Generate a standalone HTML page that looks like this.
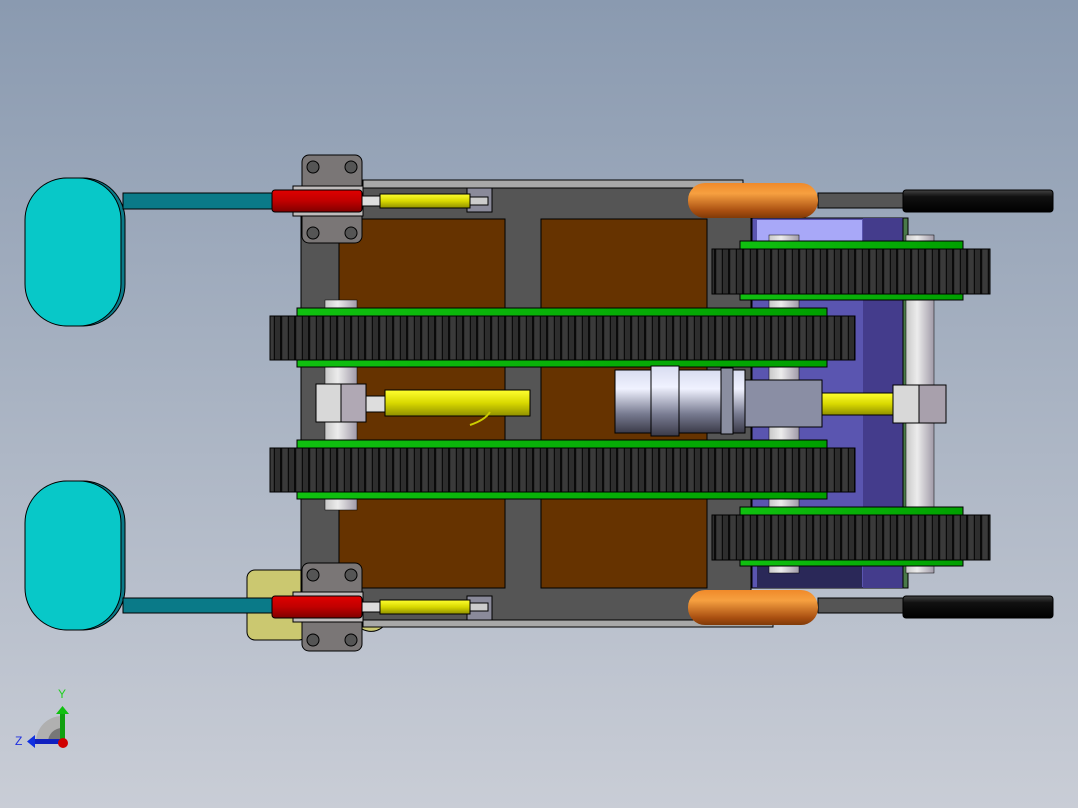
<!DOCTYPE html>
<html><head><meta charset="utf-8"><style>
html,body{margin:0;padding:0;width:1078px;height:808px;overflow:hidden}
svg{display:block}
text{font-family:"Liberation Sans",sans-serif}
</style></head><body>
<svg width="1078" height="808" viewBox="0 0 1078 808" xmlns="http://www.w3.org/2000/svg">
<defs>
<linearGradient id="bg" x1="0" y1="0" x2="0" y2="1"><stop offset="0" stop-color="#8a9ab0"/><stop offset="1" stop-color="#c9cdd6"/></linearGradient>
<pattern id="tread" width="14" height="60" patternUnits="userSpaceOnUse"><rect width="14" height="60" fill="#2e2e2e"/><rect x="0" width="2" height="60" fill="#0a0a0a"/><rect x="8" width="1" height="60" fill="#0a0a0a"/><rect x="3" width="4" height="60" fill="#3a3a3a"/></pattern>
<linearGradient id="orange" x1="0" y1="0" x2="0" y2="1"><stop offset="0" stop-color="#f08a2a"/><stop offset=".3" stop-color="#f6a040"/><stop offset=".8" stop-color="#a84e10"/><stop offset="1" stop-color="#803a08"/></linearGradient>
<linearGradient id="red" x1="0" y1="0" x2="0" y2="1"><stop offset="0" stop-color="#e00000"/><stop offset=".5" stop-color="#c00000"/><stop offset="1" stop-color="#800000"/></linearGradient>
<linearGradient id="black" x1="0" y1="0" x2="0" y2="1"><stop offset="0" stop-color="#444"/><stop offset=".3" stop-color="#111"/><stop offset="1" stop-color="#000"/></linearGradient>
<linearGradient id="silver" x1="0" y1="0" x2="0" y2="1"><stop offset="0" stop-color="#d8dcf0"/><stop offset=".3" stop-color="#f0f2ff"/><stop offset=".7" stop-color="#777a90"/><stop offset="1" stop-color="#3a3a48"/></linearGradient>
<linearGradient id="shaftv" x1="0" y1="0" x2="1" y2="0"><stop offset="0" stop-color="#c8c8c8"/><stop offset=".4" stop-color="#ececec"/><stop offset="1" stop-color="#a09aa8"/></linearGradient>
<linearGradient id="yel" x1="0" y1="0" x2="0" y2="1"><stop offset="0" stop-color="#ffff30"/><stop offset=".5" stop-color="#d8d800"/><stop offset="1" stop-color="#909000"/></linearGradient>
<linearGradient id="green" x1="0" y1="0" x2="1" y2="0"><stop offset="0" stop-color="#10c010"/><stop offset="1" stop-color="#00a000"/></linearGradient>
</defs>
<rect width="1078" height="808" fill="url(#bg)"/>

<rect x="247" y="570" width="60" height="70" rx="8" fill="#cbc870" stroke="#000"/>
<path d="M350 620 Q370 640 385 625 L350 625Z" fill="#cbc870" stroke="#000"/>

<rect x="363" y="180" width="380" height="8" fill="#a8a8a8" stroke="#000"/>
<rect x="363" y="620" width="410" height="7" fill="#a8a8a8" stroke="#000"/>
<rect x="301" y="188" width="450" height="432" fill="#555" stroke="#000"/>
<rect x="339" y="219" width="166" height="369" fill="#663300" stroke="#000"/>
<rect x="541" y="219" width="166" height="369" fill="#663300" stroke="#000"/>
<rect x="467" y="188" width="25" height="24" fill="#8a8a9a" stroke="#000"/>
<rect x="467" y="596" width="25" height="24" fill="#8a8a9a" stroke="#000"/>

<rect x="752" y="218" width="150" height="370" fill="#5a55b0" stroke="#000"/>
<rect x="863" y="218" width="40" height="370" fill="#443c8c"/>
<rect x="757" y="220" width="105" height="22" fill="#a8a8f8"/>
<rect x="757" y="565" width="105" height="22" fill="#2a2858"/>
<rect x="903" y="218" width="5" height="370" fill="#4a7a4a" stroke="#000"/>
<rect x="906" y="235" width="28" height="338" fill="url(#shaftv)" stroke="#000" stroke-width=".5"/>
<rect x="893" y="385" width="53" height="38" fill="#d8d8d8" stroke="#000"/>
<rect x="919" y="385" width="27" height="38" fill="#a8a0ac" stroke="#000"/>

<rect x="325" y="300" width="32" height="210" fill="url(#shaftv)" stroke="#000" stroke-width=".5"/>
<rect x="769" y="235" width="30" height="338" fill="url(#shaftv)" stroke="#000" stroke-width=".5"/>

<rect x="740" y="241" width="223" height="8" fill="url(#green)" stroke="#000"/>
<rect x="712" y="249" width="278" height="45" fill="url(#tread)" stroke="#000"/>
<rect x="740" y="294" width="223" height="6" fill="url(#green)" stroke="#000"/>
<rect x="740" y="507" width="223" height="8" fill="url(#green)" stroke="#000"/>
<rect x="712" y="515" width="278" height="45" fill="url(#tread)" stroke="#000"/>
<rect x="740" y="560" width="223" height="6" fill="url(#green)" stroke="#000"/>

<rect x="297" y="308" width="530" height="8" fill="url(#green)" stroke="#000"/>
<rect x="270" y="316" width="585" height="44" fill="url(#tread)" stroke="#000"/>
<rect x="297" y="360" width="530" height="7" fill="url(#green)" stroke="#000"/>
<rect x="297" y="440" width="530" height="8" fill="url(#green)" stroke="#000"/>
<rect x="270" y="448" width="585" height="44" fill="url(#tread)" stroke="#000"/>
<rect x="297" y="492" width="530" height="7" fill="url(#green)" stroke="#000"/>

<rect x="316" y="384" width="50" height="38" fill="#d8d8d8" stroke="#000"/>
<rect x="341" y="384" width="25" height="38" fill="#b0a8b4" stroke="#000"/>
<rect x="366" y="396" width="20" height="16" fill="#ddd" stroke="#000"/>
<rect x="385" y="390" width="145" height="26" fill="url(#yel)" stroke="#000"/>
<path d="M470 425 Q485 420 490 412" stroke="#cc0" stroke-width="2" fill="none"/>
<rect x="615" y="370" width="130" height="63" fill="url(#silver)" stroke="#000"/>
<rect x="651" y="366" width="28" height="70" fill="url(#silver)" stroke="#000"/>
<rect x="721" y="368" width="12" height="66" fill="#8a8ea0" stroke="#000"/>
<rect x="745" y="380" width="77" height="47" fill="#8a8ea4" stroke="#000"/>
<rect x="822" y="393" width="71" height="22" fill="url(#yel)" stroke="#000"/>

<rect x="818" y="193" width="87" height="15" fill="#555" stroke="#000"/>
<rect x="903" y="190" width="150" height="22" rx="3" fill="url(#black)" stroke="#000"/>
<rect x="688" y="183" width="130" height="35" rx="17" fill="url(#orange)"/>
<rect x="818" y="598" width="87" height="15" fill="#555" stroke="#000"/>
<rect x="903" y="596" width="150" height="22" rx="3" fill="url(#black)" stroke="#000"/>
<rect x="688" y="590" width="130" height="35" rx="17" fill="url(#orange)"/>

<g stroke="#000">
<rect x="27" y="178" width="98" height="148" rx="42" fill="#0a7a88"/>
<rect x="25" y="178" width="96" height="148" rx="42" fill="#08c8c8"/>
<rect x="123" y="193" width="152" height="16" fill="#0a7a88"/>
<rect x="27" y="481" width="98" height="149" rx="42" fill="#0a7a88"/>
<rect x="25" y="481" width="96" height="149" rx="42" fill="#08c8c8"/>
<rect x="123" y="598" width="152" height="15" fill="#0a7a88"/>
</g>

<rect x="302" y="155" width="60" height="88" rx="7" fill="#7a7676" stroke="#000"/>
<rect x="293" y="186" width="70" height="30" fill="#c0bcbc" stroke="#000"/>
<circle cx="313" cy="167" r="6" fill="#555" stroke="#000"/><circle cx="351" cy="167" r="6" fill="#555" stroke="#000"/>
<circle cx="313" cy="233" r="6" fill="#555" stroke="#000"/><circle cx="351" cy="233" r="6" fill="#555" stroke="#000"/>
<rect x="272" y="190" width="90" height="22" rx="3" fill="url(#red)" stroke="#000"/>
<rect x="362" y="196" width="22" height="10" fill="#ddd" stroke="#000"/>
<rect x="380" y="194" width="90" height="14" fill="url(#yel)" stroke="#000"/>
<rect x="470" y="197" width="18" height="8" fill="#ccc" stroke="#000"/>

<rect x="302" y="563" width="60" height="88" rx="7" fill="#7a7676" stroke="#000"/>
<rect x="293" y="592" width="70" height="30" fill="#c0bcbc" stroke="#000"/>
<circle cx="313" cy="575" r="6" fill="#555" stroke="#000"/><circle cx="351" cy="575" r="6" fill="#555" stroke="#000"/>
<circle cx="313" cy="640" r="6" fill="#555" stroke="#000"/><circle cx="351" cy="640" r="6" fill="#555" stroke="#000"/>
<rect x="272" y="596" width="90" height="22" rx="3" fill="url(#red)" stroke="#000"/>
<rect x="362" y="602" width="22" height="10" fill="#ddd" stroke="#000"/>
<rect x="380" y="600" width="90" height="14" fill="url(#yel)" stroke="#000"/>
<rect x="470" y="603" width="18" height="8" fill="#ccc" stroke="#000"/>

<path d="M36 742 A26 26 0 0 1 62 716 L62 742Z" fill="#b0b0b0"/>
<path d="M48 742 A14 14 0 0 1 62 728 L62 742Z" fill="#777"/>
<rect x="60" y="712" width="5" height="30" fill="#10a010"/>
<polygon points="56,714 62.5,706 69,714" fill="#10c010"/>
<rect x="34" y="739" width="28" height="5" fill="#1020c0"/>
<polygon points="35,735 27,741.5 35,748" fill="#1030e0"/>
<circle cx="63" cy="743" r="5" fill="#d00000"/>
<text x="58" y="698" font-size="12" fill="#20d020">Y</text>
<text x="15" y="745" font-size="12" fill="#2030e0">Z</text>
</svg>
</body></html>
